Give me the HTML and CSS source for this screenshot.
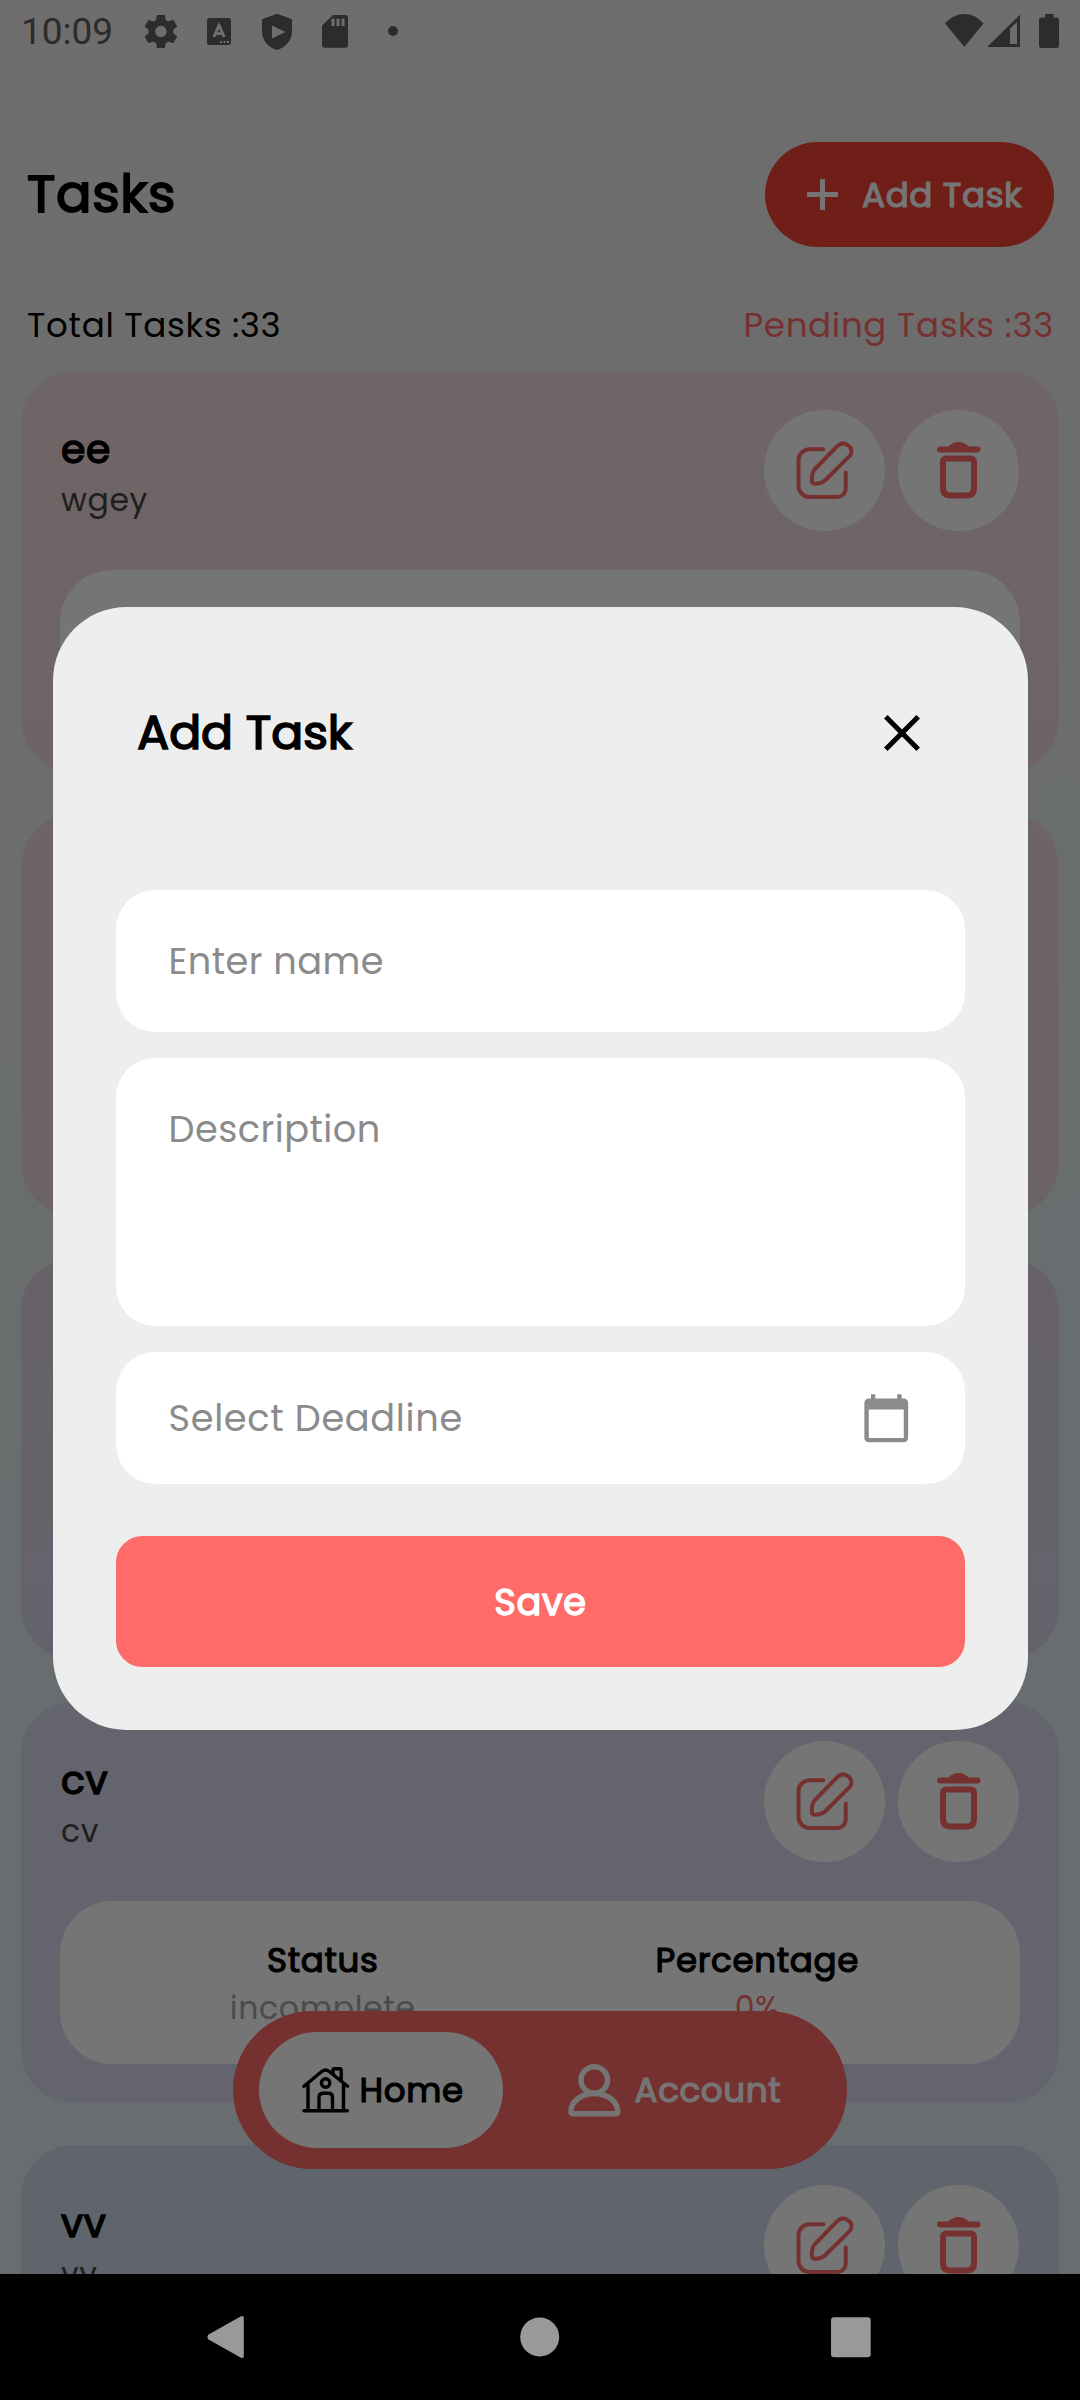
FILE: index.html
```html
<!DOCTYPE html>
<html lang="en">
<head>
<meta charset="utf-8">
<title>Tasks</title>
<link rel="stylesheet" href="styles.css">
</head>
<body>
<svg class="defs" aria-hidden="true">
  <symbol id="edit" viewBox="0 0 121 121">
    <g fill="none" stroke="#fe6b68" stroke-width="4" stroke-linecap="round" stroke-linejoin="round">
      <path d="M59.300 39.300H45.500A11 11 0 0 0 34.500 50.300V76A11 11 0 0 0 45.500 87H73A8.500 8.500 0 0 0 81.700 78.500V62.500"/>
      <path d="M73.700 35.700L50.500 59.500C48.300 62 47.800 66 47.800 70.500Q47.800 74 51.300 73.800C56 73.700 58.500 72.700 61 70.500L86 45.700A7 7 0 0 0 84.500 35.700Q79 31 73.700 35.700Z"/>
    </g>
  </symbol>
  <symbol id="trash" viewBox="0 0 121 121">
    <path d="M42 39.500H79.500" stroke="#fe6b68" stroke-width="6" stroke-linecap="round"/>
    <path d="M49.500 37.500Q54 32 60.500 32T71.500 37.500Z" fill="#fe6b68"/>
    <path d="M48.500 48.500H72.500Q76 48.500 76 52V78Q76 85.500 68.500 85.500H52.500Q45 85.500 45 78V52Q45 48.500 48.500 48.500Z" fill="none" stroke="#fe6b68" stroke-width="6"/>
  </symbol>
</svg>
<div class="screen">
  <div class="app">
    <header class="status-bar">
      <span class="clock">10:09</span>
      <svg class="status-left" viewBox="0 0 280 63" fill="#606060">
        <path fill-rule="evenodd" d="M36.200 33.200q.1-1.700 0-3.400l3.500-2.700a.8.8 0 0 0 .2-1.100l-3.300-5.700a.8.8 0 0 0-1-.4l-4.100 1.700q-1.300-1-2.800-1.700L28 15.600a.8.8 0 0 0-.8-.7h-6.600a.8.8 0 0 0-.8.7l-.7 4.300q-1.500.7-2.800 1.700l-4.100-1.700a.8.8 0 0 0-1 .4l-3.300 5.700a.8.8 0 0 0 .2 1.100l3.500 2.700q-.2 1.700 0 3.400l-3.500 2.700a.8.8 0 0 0-.2 1.100l3.300 5.700a.8.8 0 0 0 1 .4l4.100-1.700q1.300 1 2.800 1.700l.7 4.300a.8.800 0 0 0 .8.700h6.600a.8.8 0 0 0 .8-.7l.7-4.300q1.500-.7 2.800-1.700l4.100 1.700a.8.8 0 0 0 1-.4l3.300-5.700a.8.8 0 0 0-.2-1.100ZM23.900 37.300a5.800 5.800 0 1 1 0-11.600a5.800 5.800 0 0 1 0 11.600Z"/>
        <rect x="70" y="18" width="24" height="27" rx="2.500"/>
        <path d="M76.800 37L82 25.500L87.200 37M78.800 33.500H85.200" fill="none" stroke="#f0f0f0" stroke-width="3"/>
        <path d="M83 42h2m1.500 0h2m1.500 0h2" stroke="#f0f0f0" stroke-width="1.800"/>
        <path fill-rule="evenodd" d="M140 13.700L155 19.300V31C155 40 149 47.500 140 50C131 47.500 125 40 125 31V19.300ZM135 25.500V38.500L148.500 32Z"/>
        <path fill-rule="evenodd" d="M196 15H208.500Q211 15 211 17.500V45Q211 47.700 208.500 47.700H187.500Q185 47.700 185 45V25.500ZM194.500 18.700V26H197.500V18.700ZM199.500 18.700V26H202.500V18.700ZM204.500 18.700V26H207.500V18.700Z"/>
        <circle cx="256" cy="31" r="5"/>
      </svg>
      <svg class="status-right" viewBox="0 0 115 63" fill="#606060">
        <path d="M0 23.500Q8 14 19.300 14T38.500 23.500L19.300 46.700Z"/>
        <path fill-rule="evenodd" d="M42 47L75 14.700V47ZM65 28.500V44H72V22Z"/>
        <path d="M100 14H108.500V17.500H112Q114 17.500 114 20V45.500Q114 48 112 48H96Q94 48 94 45.500V20Q94 17.500 96 17.500H100Z"/>
      </svg>
    </header>

    <div class="page-head">
      <h1>Tasks</h1>
      <button class="add-btn" type="button">
        <svg viewBox="0 0 31 31"><path d="M15.500 0V31M0 15.500H31" stroke="#fff" stroke-width="5"/></svg>
        <span>Add Task</span>
      </button>
    </div>
    <div class="counts"><span>Total Tasks :33</span><span class="pending">Pending Tasks :33</span></div>

    <main class="cards">
      <article class="card c1">
        <div class="card-top">
          <div class="card-text"><h2>ee</h2><p>wgey</p></div>
          <div class="actions"><svg><use href="#edit"/></svg><svg><use href="#trash"/></svg></div>
        </div>
        <div class="info"></div>
      </article>
      <article class="card c2"></article>
      <article class="card c3"></article>
      <article class="card c4">
        <div class="card-top">
          <div class="card-text"><h2>cv</h2><p>cv</p></div>
          <div class="actions"><svg><use href="#edit"/></svg><svg><use href="#trash"/></svg></div>
        </div>
        <div class="info">
          <div><b>Status</b><span class="status">incomplete</span></div>
          <div><b>Percentage</b><span class="pct">0%</span></div>
        </div>
      </article>
      <article class="card c5">
        <div class="card-top">
          <div class="card-text"><h2>vv</h2><p>vv</p></div>
          <div class="actions"><svg><use href="#edit"/></svg><svg><use href="#trash"/></svg></div>
        </div>
      </article>
    </main>

    <nav class="tabs">
      <a class="tab active">
        <svg width="48" height="46" viewBox="0 0 48 46" fill="none" stroke="#000" stroke-width="3.400" stroke-linecap="round" stroke-linejoin="round">
          <path d="M2 19.300L20 4.300Q23.500 1.800 27 4.300L45.500 19.300M6 17.500V43.500M41.500 17.500V43.500M2 43.700H45.500M31 6.500V3.200Q31 1.800 32.500 1.800H37.800Q39.200 1.800 39.200 3.200V13.500M17 43V30.500Q17 26.300 21.200 26.300H26.300Q30.500 26.300 30.500 30.500V43"/>
          <circle cx="23.600" cy="16" r="4.200"/>
        </svg>
        <span>Home</span>
      </a>
      <a class="tab account">
        <svg width="53" height="53" viewBox="0 0 53 53" fill="none" stroke="#fff" stroke-width="5.400" stroke-linejoin="round">
          <ellipse cx="26.300" cy="16" rx="13.300" ry="13.300"/>
          <path d="M26.300 29.500C13 29.500 3 37.500 3 47.500Q3 49.700 5 49.700H47.500Q49.700 49.700 49.700 47.500C49.700 37.500 39.500 29.500 26.300 29.500Z"/>
        </svg>
        <span>Account</span>
      </a>
    </nav>
  </div>

  <footer class="system-nav">
    <svg viewBox="0 0 1080 126" fill="#999">
      <path d="M208.500 60.500Q206.300 63 208.500 65.500L240.500 83.500Q243.800 85 243.800 82V44Q243.800 41 240.500 42.500Z"/>
      <circle cx="539.700" cy="63" r="19.500"/>
      <rect x="831" y="43.300" width="39.700" height="40" rx="3"/>
    </svg>
  </footer>

  <div class="scrim">
    <section class="dialog">
      <div class="dialog-head">
        <h2>Add Task</h2>
        <svg viewBox="0 0 36 36"><path d="M1.800 1.800L34.200 34.200M34.200 1.800L1.800 34.200" stroke="#000" stroke-width="5"/></svg>
      </div>
      <div class="field name"><span>Enter name</span></div>
      <div class="field description"><span>Description</span></div>
      <div class="field deadline">
        <span>Select Deadline</span>
        <svg viewBox="0 0 24 24" fill="#8b8b8b"><path d="M20 3h-1V1h-2v2H7V1H5v2H4c-1.100 0-2 .9-2 2v16c0 1.100.9 2 2 2h16c1.100 0 2-.9 2-2V5c0-1.100-.9-2-2-2zm0 18H4V8h16v13z"/></svg>
      </div>
      <button class="save" type="button">Save</button>
    </section>
  </div>
</div>
</body>
</html>
```
FILE: styles.css
```css
* { box-sizing: border-box; margin: 0; padding: 0; }
body { font-family: Poppins, Inter, sans-serif; font-weight: 400; letter-spacing: .656px; color: #000; }
svg { display: block; flex: none; }
button { border: 0; font: inherit; letter-spacing: inherit; color: inherit; }
/* emphasis thickens the regular cut, which keeps its advance widths */
h1, h2, b, .add-btn span, .tab span, .save { font-weight: 400; -webkit-text-stroke: .036em currentColor; }
.defs { position: absolute; width: 0; height: 0; }

.screen { position: relative; width: 1080px; height: 2400px; overflow: hidden; display: flex; flex-direction: column; }
.app {
  position: relative; height: 2274px; overflow: hidden; display: flex; flex-direction: column;
  background: linear-gradient(165deg, #f1edef 0%, #f0edee 20%, #e2eff1 62%, #e2eff1 100%);
}

.status-bar { height: 63px; display: flex; align-items: center; padding-left: 21px; }
.clock { width: 116px; font: 400 37px/63px Roboto, sans-serif; letter-spacing: 0; color: #606060; }
.status-left { width: 280px; height: 63px; }
.status-right { width: 115px; height: 63px; margin: 0 20px 0 auto; }

.page-head { height: 184px; padding: 79px 26px 0 27px; display: flex; justify-content: space-between; }
h1 { font-size: 52.500px; line-height: 104px; }
.add-btn {
  width: 289.500px; height: 105px; border-radius: 53px; background: #f44336; color: #fff;
  display: flex; align-items: center; gap: 24px; padding-left: 42.500px; font-size: 34.125px;
}
.add-btn svg { width: 31px; height: 31px; }
.add-btn span { padding-top: 2px; }
.counts { height: 123.700px; padding: 0 26px 0 27px; display: flex; justify-content: space-between; font-size: 34.125px; line-height: 157px; }
.pending { color: #fe6b68; }

.cards { padding: 0 21px; display: flex; flex-direction: column; gap: 42px; }
.card { height: 401.700px; flex: none; border-radius: 52.500px; padding: 39.400px; }
.c1 { background: linear-gradient(#f1dcde, #f0dade); }
.c2 { background: linear-gradient(#f0dadf, #ecd7e2); }
.c3 { background: linear-gradient(#dfd6e1, #dbd7ec); }
.c4 { background: #dbdbef; }
.c5 { background: #d1dbec; }
.card-top { height: 160px; display: flex; justify-content: space-between; }
.card-text { padding: 14.500px 0 0 .6px; }
.card-text h2 { font-size: 39.375px; line-height: 50px; }
.card-text p { font-size: 31.500px; line-height: 50px; color: #444; }
.actions { display: flex; gap: 13px; margin-right: .6px; }
.actions svg { width: 121px; height: 121px; border-radius: 50%; background: #fff; }
.info { height: 162.600px; border-radius: 52.500px; background: #fff; padding: 35px 45px 0; display: grid; grid-template-columns: 1fr 1fr; text-align: center; }
.info b, .info span { display: block; }
.info b { font-size: 34.125px; line-height: 48px; }
.info span { font-size: 31.500px; line-height: 48px; }
.status { color: #a3a3a3; }
.pct { color: #fe6b68; }

.tabs {
  position: absolute; left: 233px; top: 2011px; width: 614px; height: 158px; border-radius: 79px;
  background: #fe6b68; display: flex; align-items: center; padding-left: 26px; gap: 65px;
}
.tab { display: flex; align-items: center; font-size: 34.125px; }
.active { width: 244px; height: 116px; border-radius: 58px; background: #fff; padding-left: 42.500px; gap: 10px; }
.account { color: #fff; gap: 13.500px; }

.system-nav { height: 126px; background: #000; }
.system-nav svg { width: 1080px; height: 126px; }

.scrim {
  position: absolute; left: 0; top: 0; width: 1080px; height: 2274px; padding-top: 63px;
  background: rgba(0, 0, 0, .54); display: flex; align-items: center; justify-content: center;
}
.dialog { width: 975px; height: 1123.750px; border-radius: 73.500px; background: #eee; padding: 63px 63px 0; display: flex; flex-direction: column; }
.dialog-head { height: 127px; margin-bottom: 93.800px; padding: 0 45px 0 21.800px; display: flex; align-items: center; justify-content: space-between; }
.dialog-head h2 { font-size: 47.250px; letter-spacing: 0; }
.dialog-head svg { width: 36px; height: 36px; }
.field { background: #fff; border-radius: 39.400px; padding: 0 52.500px 0 53px; color: #8b8b8b; font-size: 36.750px; display: flex; align-items: center; justify-content: space-between; }
.name { height: 141.700px; margin-bottom: 26.300px; letter-spacing: .44px; }
.description { height: 267.500px; margin-bottom: 26.300px; align-items: flex-start; line-height: 142px; letter-spacing: .44px; }
.deadline { height: 131.300px; margin-bottom: 52.500px; }
.deadline svg { width: 52.500px; height: 52.500px; }
.save { height: 131.300px; border-radius: 26.300px; background: #fe6b68; color: #fff; font-size: 36.750px; padding-left: 1px; }
```
